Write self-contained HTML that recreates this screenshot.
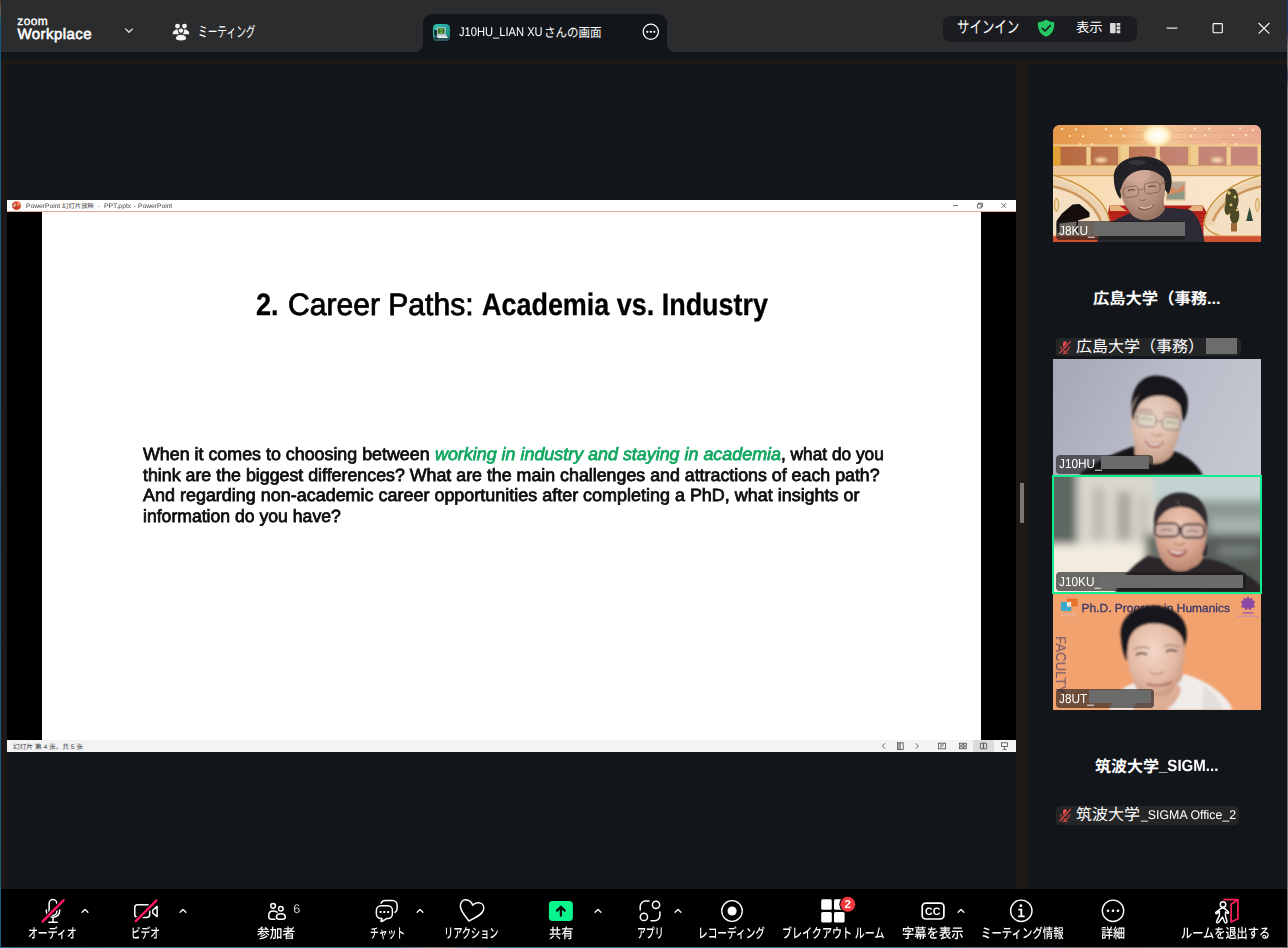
<!DOCTYPE html>
<html lang="ja"><head><meta charset="utf-8"><title>Zoom Workplace</title>
<style>
*{box-sizing:border-box;margin:0;padding:0}
html,body{width:1288px;height:948px;overflow:hidden;background:#12161a}
body{text-rendering:geometricPrecision;font-family:"Liberation Sans",sans-serif;color:#fff;position:relative}
#app{position:absolute;left:0;top:0;width:1288px;height:948px;overflow:hidden;background:#12161a}
.edge-l{left:0;top:0;width:1px;height:948px;background:linear-gradient(#5a3226 0,#6a5a4c 10px,#175a78 22px,#175a78 40%,#234f70 55%,#175a78 70%,#1a5d78 100%)}
.edge-r{left:1287px;top:0;width:1px;height:948px;background:linear-gradient(#1d3a68 0,#1d3a68 28px,#3a3552 34px,#6e6e73 46px,#6e6e73 66px,#3f3b5c 74px,#6e6e73 90px,#6e6e73 100%)}
.edge-b{left:0;top:947px;width:1288px;height:1px;background:linear-gradient(90deg,#2d6a82 0,#3a7a90 30%,#6f7d86 34%,#2f6f88 40%,#35718a 70%,#6e6e73 90%,#6e6e73 100%)}
.abs,.ic,.jt,.t{position:absolute}
.ic{display:block;overflow:visible}
.jt{display:block;overflow:visible;line-height:1}
.jt svg{display:block;position:absolute;left:0;top:0;overflow:visible}
.jt text{font-family:"Liberation Sans","Noto Sans CJK JP",sans-serif}
.jt text.sc{font-family:"Liberation Sans","Noto Sans CJK SC",sans-serif}
.t{white-space:nowrap;line-height:1;transform-origin:0 0}
.region{position:absolute;left:0;top:0;width:1288px;height:948px}
.titlebar-bg{left:1px;top:0;width:1286px;height:52px;background:#2b2c2e}
.tab{left:423px;top:14px;width:244px;height:38px;background:#12161a;border-radius:9px 9px 0 0}
.pill{left:943px;top:16px;width:194px;height:26px;border-radius:8px;background:#1a1c1f}
.toolbar-bg{left:1px;top:889px;width:1286px;height:58px;background:#000}
.brown{background:#1c1917}
.vid{overflow:hidden}
.vid svg{display:block}
.nm{background:rgba(24,24,26,.62);border-radius:4px}
.nm2{background:#242527;border-radius:4px}
</style></head>
<body>
<div id="app">
<div class="abs edge-l"></div><div class="abs edge-r"></div><div class="abs edge-b"></div>
<header class="region" id="titlebar">
<div class="abs titlebar-bg"></div>
<div class="t" style="left:17.2px;top:16.2px;font-size:11.9px;-webkit-text-stroke:0.4px #fff;letter-spacing:0.5px">zoom</div>
<div class="t" style="left:17.4px;top:27.2px;font-size:15px;-webkit-text-stroke:0.6px #fff;letter-spacing:0.45px">Workplace</div>
<svg class="ic" style="left:122px;top:25px" width="14" height="11" viewBox="122 25 14 11" ><path d="M125.3 28.6 L129 32.3 L132.7 28.6" fill="none" stroke="#e8e8e8" stroke-width="1.3"/></svg>
<svg class="ic" style="left:171px;top:22px" width="20" height="20" viewBox="171 22 20 20" ><g fill="#f2f2f2"><circle cx="177.5" cy="26.1" r="2.45"/><circle cx="184.5" cy="26.1" r="2.45"/><path d="M172.7 34.2 C172.7 31.2 175 29.6 177.2 29.6 C177.6 29.6 178 29.7 178.3 29.8 C177.9 30.6 177.8 31.6 178.3 32.5 C178.6 33.2 179 33.7 179.5 34.1 C179 34.2 178.4 34.3 177.8 34.3 Z"/><path d="M189.3 34.2 C189.3 31.2 187 29.6 184.8 29.6 C184.4 29.6 184 29.7 183.7 29.8 C184.1 30.6 184.2 31.6 183.7 32.5 C183.4 33.2 183 33.7 182.5 34.1 C183 34.2 183.6 34.3 184.2 34.3 Z"/><circle cx="181" cy="30.6" r="2.7" stroke="#2b2c2e" stroke-width="0.9"/><path d="M175.9 38.2 C175.9 35.9 178.3 34.7 181 34.7 C183.7 34.7 186.1 35.9 186.1 38.2 C186.1 39.7 183.9 40.4 181 40.4 C178.1 40.4 175.9 39.7 175.9 38.2 Z"/></g></svg>
<span class="jt" style="left:198.20px;top:23.66px;width:57.50px;height:17.52px;font-size:14.6px"><svg width="57.50" height="17.52" viewBox="0 -13.14 57.50 17.52"><text x="0" y="0" font-size="14.6" fill="#fff" textLength="57.5" lengthAdjust="spacingAndGlyphs">ミーティング</text></svg></span>
<div class="abs tab"></div>
<svg class="ic" style="left:415px;top:44px" width="8" height="8" viewBox="415 44 8 8" ><path d="M415 52 A8 8 0 0 0 423 44 L423 52 Z" fill="#12161a"/></svg>
<svg class="ic" style="left:667px;top:44px" width="8" height="8" viewBox="667 44 8 8" ><path d="M675 52 A8 8 0 0 1 667 44 L667 52 Z" fill="#12161a"/></svg>
<svg class="ic" style="left:433px;top:24px" width="17" height="17" viewBox="433 24 17 17" ><defs><linearGradient id="tg" x1="0" y1="0" x2="1" y2="1"><stop offset="0" stop-color="#2fc4b4"/><stop offset="1" stop-color="#15807c"/></linearGradient></defs><rect x="433" y="24" width="17" height="17" rx="4.2" fill="url(#tg)"/><path d="M433 36.5 L450 36.5 L450 37 Q450 41 446 41 L437 41 Q433 41 433 37 Z" fill="#2d5860"/><rect x="436.6" y="27.2" width="9.2" height="8" rx="0.8" fill="#b9c6c9"/><rect x="437.9" y="28.3" width="6.6" height="5.4" fill="#2d6b22"/><path d="M439.5 29.4h3.4M439.5 31h3.4M439.5 32.6h3.4" stroke="#7fd64a" stroke-width="0.7"/><path d="M437.6 35.2 L446.4 35.2 L448 37.9 L436 37.9 Z" fill="#dfe6e8"/><rect x="434.4" y="30" width="2.4" height="5.6" fill="#0d1a1c"/><path d="M435 37.4 L438 37.4 L438 38.6 L435 38.6 Z" fill="#0d1a1c"/></svg>
<div class="t" style="left:459px;top:26px;font-size:12.6px;transform:scaleX(0.885);letter-spacing:0">J10HU_LIAN XU</div>
<span class="jt" style="left:543.60px;top:25.28px;width:57.60px;height:15.36px;font-size:12.8px"><svg width="57.60" height="15.36" viewBox="0 -11.52 57.60 15.36"><text x="0" y="0" font-size="12.8" fill="#fff" textLength="57.6" lengthAdjust="spacingAndGlyphs">さんの画面</text></svg></span>
<svg class="ic" style="left:641px;top:22px" width="20" height="20" viewBox="641 22 20 20" ><circle cx="650.8" cy="31.8" r="7.6" fill="none" stroke="#fff" stroke-width="1.25"/><circle cx="647.3" cy="31.8" r="1.15" fill="#fff"/><circle cx="650.8" cy="31.8" r="1.15" fill="#fff"/><circle cx="654.3" cy="31.8" r="1.15" fill="#fff"/></svg>
<div class="abs pill"></div>
<span class="jt" style="left:956.50px;top:18.48px;width:62.30px;height:20.16px;font-size:16.8px"><svg width="62.30" height="20.16" viewBox="0 -15.12 62.30 20.16"><text x="0" y="0" font-size="16.8" fill="#fff" textLength="62.3" lengthAdjust="spacingAndGlyphs">サインイン</text></svg></span>
<svg class="ic" style="left:1036px;top:18px" width="20" height="20" viewBox="1036 18 20 20" ><path d="M1046.1 19.5 C1048.6 21.3 1051.3 22 1054.3 22.2 C1054.6 29.3 1052.3 34.2 1046.1 36.7 C1039.9 34.2 1037.6 29.3 1037.9 22.2 C1040.9 22 1043.6 21.3 1046.1 19.5 Z" fill="#25c862"/><path d="M1042.3 28.3 L1045 31 L1050.2 25.6" fill="none" stroke="#1b1d20" stroke-width="1.7" stroke-linecap="round" stroke-linejoin="round"/></svg>
<span class="jt" style="left:1075.60px;top:19.93px;width:26.60px;height:15.96px;font-size:13.3px"><svg width="26.60" height="15.96" viewBox="0 -11.97 26.60 15.96"><text x="0" y="0" font-size="13.3" fill="#fff" textLength="26.6" lengthAdjust="spacingAndGlyphs">表示</text></svg></span>
<svg class="ic" style="left:1109px;top:22px" width="12" height="12" viewBox="1109 22 12 12" ><g fill="#d9d9d9"><rect x="1110" y="22.9" width="5.6" height="10.3" rx="0.6"/><rect x="1116.6" y="22.9" width="3.7" height="2.9" rx="0.5"/><rect x="1116.6" y="26.6" width="3.7" height="2.9" rx="0.5"/><rect x="1116.6" y="30.3" width="3.7" height="2.9" rx="0.5"/></g></svg>
<svg class="ic" style="left:1160px;top:20px" width="120" height="16" viewBox="1160 20 120 16" ><path d="M1166.6 28.1 H1177.4" stroke="#fff" stroke-width="1.1"/><rect x="1213.1" y="23.6" width="9.2" height="9.2" rx="0.8" fill="none" stroke="#fff" stroke-width="1.1"/><path d="M1258.6 23 L1269.4 33.6 M1269.4 23 L1258.6 33.6" stroke="#fff" stroke-width="1.1"/></svg>
</header>
<main class="region" id="stage">
<div class="abs brown" style="left:1px;top:60px;width:1286px;height:4px"></div>
<div class="abs brown" style="left:1px;top:60px;width:6px;height:829px"></div>
<div class="abs brown" style="left:1016px;top:60px;width:12px;height:829px"></div>
<div class="abs" style="left:1020px;top:483px;width:4px;height:40px;background:#7a7875"></div>
<section class="abs" id="ppt" style="left:7px;top:200px;width:1009px;height:552px;background:#fff"></section>
<div class="abs" style="left:7px;top:211px;width:1009px;height:1px;background:#e6a999"></div>
<div class="abs" style="left:7px;top:212px;width:35px;height:528px;background:#000"></div>
<div class="abs" style="left:981px;top:212px;width:35px;height:528px;background:#000"></div>
<div class="abs" style="left:7px;top:740px;width:1009px;height:12px;background:#f3f3f5"></div>
<svg class="ic" style="left:11px;top:200px" width="12" height="12" viewBox="11 200 12 12" ><circle cx="16.6" cy="205.6" r="4.4" fill="#d24625"/><path d="M16.6 201.2 A4.4 4.4 0 0 1 21 205.6 L16.6 205.6 Z" fill="#f08a65"/><rect x="12.6" y="203" width="4.6" height="5.2" rx="0.6" fill="#b7361b"/><path d="M14 207.2 V204 H15.2 A1 1 0 0 1 15.2 206 H14" fill="none" stroke="#fff" stroke-width="0.7"/></svg>
<div class="t" style="left:25.6px;top:202.1px;font-size:13px;color:#3b3b3b;transform:scale(0.5144,0.5)">PowerPoint</div>
<span class="jt" style="left:61.70px;top:202.24px;width:32.00px;height:7.68px;font-size:6.4px"><svg width="32.00" height="7.68" viewBox="0 -5.76 32.00 7.68"><text class="sc" x="0" y="0" font-size="6.4" fill="#3b3b3b" textLength="32" lengthAdjust="spacingAndGlyphs">幻灯片放映</text></svg></span>
<div class="t" style="left:98.4px;top:202.1px;font-size:13px;color:#3b3b3b;transform:scale(0.4374,0.5)">-</div>
<div class="t" style="left:104.2px;top:202.1px;font-size:13px;color:#3b3b3b;transform:scale(0.5228,0.5)">PPT.pptx</div>
<div class="t" style="left:133.8px;top:202.1px;font-size:13px;color:#3b3b3b;transform:scale(0.4374,0.5)">-</div>
<div class="t" style="left:138.2px;top:202.1px;font-size:13px;color:#3b3b3b;transform:scale(0.5144,0.5)">PowerPoint</div>
<svg class="ic" style="left:950px;top:200px" width="60" height="12" viewBox="950 200 60 12" ><g fill="none" stroke="#444" stroke-width="0.8"><path d="M953 205.6 H958"/><rect x="977.4" y="204.2" width="3.8" height="3.8" rx="0.6"/><path d="M978.6 204.2 V203.2 H982.4 V207 H981.2"/><path d="M1001.4 203.2 L1006 207.8 M1006 203.2 L1001.4 207.8"/></g></svg>
<div class="t" style="left:256.2px;top:289.40px;font-size:31px;color:#000;-webkit-text-stroke:0.3px #000;transform:scaleX(0.8740)"><span style="font-weight:700">2.</span></div>
<div class="t" style="left:287.6px;top:289.40px;font-size:31px;color:#000;-webkit-text-stroke:0.8px #000;transform:scaleX(0.9704)">Career Paths:</div>
<div class="t" style="left:481.8px;top:289.40px;font-size:31px;color:#000;-webkit-text-stroke:0.3px #000;transform:scaleX(0.8691)"><span style="font-weight:700">Academia vs. Industry</span></div>
<div class="t" style="left:142.8px;top:446.20px;font-size:17.7px;color:#0b0b0b;-webkit-text-stroke:0.75px #0b0b0b;transform:scaleX(1.0087)">When it comes to choosing between</div>
<div class="t" style="left:435px;top:446.20px;font-size:17.7px;color:#10a760;-webkit-text-stroke:0.75px #10a760;transform:scaleX(1.0112)"><span style="font-style:italic">working in industry and staying in academia</span></div>
<div class="t" style="left:781.4px;top:446.20px;font-size:17.7px;color:#0b0b0b;-webkit-text-stroke:0.75px #0b0b0b;transform:scaleX(0.9770)">, what do you</div>
<div class="t" style="left:142.8px;top:467.20px;font-size:17.7px;color:#0b0b0b;-webkit-text-stroke:0.75px #0b0b0b;transform:scaleX(1.0061)">think are the biggest differences? What are the main challenges and attractions of each path?</div>
<div class="t" style="left:142.8px;top:487.20px;font-size:17.7px;color:#0b0b0b;-webkit-text-stroke:0.75px #0b0b0b;transform:scaleX(1.0150)">And regarding non-academic career opportunities after completing a PhD, what insights or</div>
<div class="t" style="left:142.8px;top:508.20px;font-size:17.7px;color:#0b0b0b;-webkit-text-stroke:0.75px #0b0b0b;transform:scaleX(0.9958)">information do you have?</div>
<span class="jt" style="left:13.40px;top:743.07px;width:70.05px;height:8.04px;font-size:6.7px"><svg width="70.05" height="8.04" viewBox="0 -6.03 70.05 8.04"><text class="sc" x="0" y="0" font-size="6.7" fill="#3a3a3a" textLength="70.05" lengthAdjust="spacingAndGlyphs">幻灯片 第 4 张，共 5 张</text></svg></span>
<div class="abs" style="left:973px;top:740px;width:21px;height:12px;background:#dcdcdc"></div>
<svg class="ic" style="left:878px;top:740px" width="135" height="12" viewBox="878 740 135 12" ><g fill="none" stroke="#4a4a4a" stroke-width="0.8"><path d="M885 743.3 L882.4 746 L885 748.7"/><path d="M915.8 743.3 L918.4 746 L915.8 748.7"/><rect x="897.6" y="742.8" width="5.6" height="6.6"/><path d="M899 742.8 V749.4 M900.2 742.8 V749.4" /><rect x="938.4" y="743.2" width="7" height="5.6"/><path d="M940 745 H944 M940 746.8 H942.4"/><rect x="959.4" y="743.2" width="2.8" height="2"/><rect x="963.6" y="743.2" width="2.8" height="2"/><rect x="959.4" y="746.8" width="2.8" height="2"/><rect x="963.6" y="746.8" width="2.8" height="2"/><path d="M980.4 743.4 V748.8 H983.4 V743 Z M986.6 743.4 V748.8 H983.6 V743 Z"/><rect x="1001.6" y="742.8" width="6" height="3.6"/><path d="M1004.6 746.4 V749 M1002.6 749.4 H1006.6"/></g></svg>
</main>
<aside class="region" id="gallery">
<div class="abs vid" style="left:1053px;top:125px;width:208px;height:117px;border-radius:7px 7px 0 0"><svg width="208" height="117" viewBox="0 0 208 117"><defs><filter id="b1" x="-5%" y="-5%" width="110%" height="110%"><feGaussianBlur stdDeviation="0.75"/></filter><filter id="b1b" x="-30%" y="-30%" width="160%" height="160%"><feGaussianBlur stdDeviation="1.6"/></filter><linearGradient id="c1" x1="0" x2="1"><stop offset="0" stop-color="#e5984a"/><stop offset="0.35" stop-color="#eeb070"/><stop offset="0.5" stop-color="#f6cf9e"/><stop offset="0.65" stop-color="#efb892"/><stop offset="1" stop-color="#ebac92"/></linearGradient><linearGradient id="uw1" x1="0" x2="1" y1="0" y2="0"><stop offset="0" stop-color="#b6693c"/><stop offset="0.4" stop-color="#be7858"/><stop offset="0.6" stop-color="#c48474"/><stop offset="1" stop-color="#c5887c"/></linearGradient><linearGradient id="lw1" x1="0" x2="1" y1="0" y2="0"><stop offset="0" stop-color="#f8d9aa"/><stop offset="0.5" stop-color="#f8e2c4"/><stop offset="1" stop-color="#fbe6d0"/></linearGradient><radialGradient id="ch1"><stop offset="0" stop-color="#ffffff"/><stop offset="0.55" stop-color="#fff8dc"/><stop offset="0.82" stop-color="#fde4ae" stop-opacity="0.9"/><stop offset="1" stop-color="#f6cf9e" stop-opacity="0"/></radialGradient><radialGradient id="f1" cx="0.45" cy="0.3" r="0.75"><stop offset="0" stop-color="#cfa794"/><stop offset="0.6" stop-color="#b58d7b"/><stop offset="1" stop-color="#93705f"/></radialGradient><linearGradient id="st1" y1="0" y2="1" x1="0" x2="0"><stop offset="0" stop-color="#b51c18"/><stop offset="1" stop-color="#d63a2c"/></linearGradient></defs><rect width="208" height="117" fill="url(#lw1)"/><g filter="url(#b1)"><rect y="-2" width="208" height="23.5" fill="url(#c1)"/><path d="M0 7.5 H208 M0 14.5 H208" stroke="#d9924f" stroke-width="0.6" opacity="0.5"/><rect y="20.6" width="208" height="20" fill="url(#uw1)"/><rect y="19.4" width="208" height="2.2" fill="#f0c98c"/><rect x="-1" y="21" width="8.5" height="30" fill="#dfa238"/><g fill="#efcd8e"><rect x="33.4" y="22" width="4.4" height="19"/><rect x="65" y="21" width="11" height="20"/><rect x="102.6" y="21" width="4.3" height="19"/><rect x="135" y="21" width="10.4" height="20"/><rect x="173.5" y="22" width="4.4" height="19"/><rect x="204.5" y="21" width="5" height="30"/></g><g fill="#e2ab62" opacity="0.55"><rect x="65" y="21" width="2.5" height="20"/><rect x="135" y="21" width="2.5" height="20"/></g><rect y="40.3" width="208" height="10.6" fill="#efc796"/><rect y="40" width="208" height="1.1" fill="#d5a565"/><rect y="49.9" width="208" height="1.3" fill="#d2a05c"/><rect x="112.8" y="56.1" width="19.9" height="19.5" fill="#d6bc9a"/><rect x="114.2" y="57.5" width="17.1" height="16.7" fill="#b7aa94"/><path d="M114.2 68 L119 62 L124 65 L131.3 59 V71 L114.2 74.2Z" fill="#d38a62"/><path d="M114.2 70 L131.3 66 V74.2 H114.2Z" fill="#8f9a86"/><path d="M56.5 80.4 H149.5 L172 117 H49 Z" fill="url(#st1)"/><g stroke="#8a1411" stroke-width="0.8" opacity="0.65"><path d="M56 84.5H152M55 88.5H155M54 92.5H157M53 96.5H160M52 100.5H162M51 104.5H165M50.5 108.5H167M50 112.5H170"/></g><path d="M56.5 80.4 L66 80.4 L74 86 L57 86 Z M149.5 80.4 L140 80.4 L133 86 L150 86 Z" fill="#e4b27a"/><path d="M-2 50 C24 58 50 72 57.5 98 L57.5 117 L-2 117 Z" fill="#f4dfc2"/><path d="M210 50 C184 58 158 72 150.5 98 L150.5 117 L210 117 Z" fill="#f4dfc2"/><path d="M-2 62 C20 66 40 78 47 100 L57 100 C52 76 28 60 -2 52 Z" fill="#ecd2ae"/><path d="M210 62 C188 66 168 78 161 100 L151 100 C156 76 180 60 210 52 Z" fill="#ecd2ae"/><path d="M-2 49.5 C26 57 53 72 57 98" fill="none" stroke="#cc9642" stroke-width="1.5"/><path d="M-2 61 C20 65 40 76 48 96" fill="none" stroke="#c58a4a" stroke-width="2.4" opacity="0.8"/><path d="M210 49.5 C182 57 155 72 151 98" fill="none" stroke="#cc9642" stroke-width="1.5"/><path d="M210 61 C188 65 168 76 160 96" fill="none" stroke="#c58a4a" stroke-width="2.4" opacity="0.8"/><path d="M151 98 C153 105 161 110 174 112" fill="none" stroke="#cc9642" stroke-width="1.3"/><path d="M57 98 C55.5 103 52 107 47 109" fill="none" stroke="#cc9642" stroke-width="1.3"/><rect y="110.8" width="208" height="7" fill="#cf5230"/><rect y="110.2" width="208" height="1" fill="#ecb988"/><path d="M3.5 96 L9 88.5 L19.5 79.6 L26.5 79 L36.5 87.5 L36.5 92 L25 95.4 L25 108 L23.4 108 L23.4 96.4 L6.4 98.6 L6.4 108 L4.6 108 Z" fill="#14100f"/><ellipse cx="3.6" cy="80" rx="2.8" ry="7" fill="#d9aa62"/><ellipse cx="3.6" cy="80" rx="1.5" ry="5" fill="#f1dab2"/><g fill="#4c4a26"><ellipse cx="179" cy="75" rx="6.6" ry="11.5"/><ellipse cx="181.5" cy="90" rx="4.8" ry="9"/><ellipse cx="174.5" cy="84" rx="3" ry="6"/></g><path d="M193.2 96 L196.6 82 L200 96 Z" fill="#2f4a3a"/><g fill="#e0cb72"><circle cx="176" cy="68" r="1.7"/><circle cx="182" cy="72" r="1.4"/><circle cx="178" cy="80" r="1.4"/><circle cx="184" cy="85" r="1.2"/><circle cx="176.5" cy="90" r="1.1"/></g><rect x="178" y="98" width="6" height="8.5" fill="#9c6838"/><ellipse cx="204.4" cy="80" rx="2.4" ry="7" fill="#d9aa62"/><ellipse cx="204.4" cy="80" rx="1.2" ry="5" fill="#f1dab2"/><g fill="#f8dcae" filter="url(#b1b)"><ellipse cx="48" cy="35" rx="6" ry="2.6"/><ellipse cx="164" cy="35" rx="6" ry="2.6"/><ellipse cx="104" cy="34" rx="4" ry="2.4" opacity="0.6"/></g></g><ellipse cx="104.3" cy="10.6" rx="15.5" ry="12" fill="url(#ch1)"/><g fill="#fff4d2"><circle cx="9" cy="4" r="1"/><circle cx="23" cy="4.2" r="1"/><circle cx="53" cy="4" r="1"/><circle cx="68" cy="4" r="1"/><circle cx="17" cy="11" r="1"/><circle cx="30" cy="11.2" r="1"/><circle cx="58" cy="11" r="1"/><circle cx="71" cy="11" r="1"/><circle cx="27" cy="19" r="0.9"/><circle cx="39" cy="19" r="0.9"/><circle cx="142" cy="3.6" r="1"/><circle cx="156" cy="3.6" r="1"/><circle cx="187" cy="3.2" r="1"/><circle cx="200" cy="5" r="1"/><circle cx="138" cy="11" r="1"/><circle cx="152" cy="10.6" r="1"/><circle cx="180" cy="10" r="1"/><circle cx="193" cy="10" r="1"/><circle cx="171" cy="19" r="0.9"/><circle cx="183" cy="19" r="0.9"/></g><g filter="url(#b1)"><path d="M44 117 C48 104 56 97 66 93 L80 87 L112 82.5 L136 84.5 C144 88 149 100 151.5 117 Z" fill="#2f2c36"/><path d="M76 86 C82 98 104 99 112 84 L110 74 L78 74 Z" fill="#9c7462"/><path d="M60.8 53 C60.4 40 72 31.6 90 31.6 C107 31.6 118.6 41 118.6 55 C118.6 62 117.2 66 115.3 69 L110 62 L72 58 L67.4 74 C62.6 68 60.9 60 60.8 53 Z" fill="#242027"/><g transform="rotate(-7 89 66)"><path d="M67 60 C67 46 76 39 90 39 C104 39 112.6 47 112.6 60 C112.6 77 104 95 90 95 C77 95 67 77 67 60 Z" fill="url(#f1)"/><ellipse cx="87" cy="50" rx="13" ry="6.5" fill="#d2ab98" opacity="0.75"/></g><path d="M62 60 C64 44 76 36 91 36.5 C104 37 113 45 116.6 60 C110 50 102 45.4 93 45 C82 44.6 72 50 68.5 62 C67 66 66 68 65 70 Z" fill="#242027"/><ellipse cx="84" cy="37.5" rx="9" ry="2.6" fill="#4a4650" opacity="0.5"/><g fill="none" stroke="#5c4a46" stroke-width="0.65" opacity="0.8"><rect x="70.5" y="61.5" width="15" height="10.5" rx="3.8" transform="rotate(-9 78 67)"/><rect x="91.5" y="57.6" width="15.5" height="10.5" rx="3.8" transform="rotate(-9 99 63)"/><path d="M85.4 65 L91.6 63.6 M106.8 59.6 L114.6 56.6"/></g><path d="M75 65.6 C77 64.6 80 64.4 82 65.2 M95.5 61.8 C97.5 60.8 100.5 60.8 102.5 61.6" stroke="#4a3834" stroke-width="1" fill="none"/><path d="M85.6 82.8 C90 85.6 97 84.4 101 80" fill="none" stroke="#87584e" stroke-width="1.6"/><path d="M87.4 82.2 C91 83.8 96 83 99.4 80.6" fill="none" stroke="#ead8cf" stroke-width="1.1"/><path d="M86 74.4 C88 76.2 91 76 93 74" fill="none" stroke="#946a5a" stroke-width="1"/></g></svg></div>
<div class="abs nm" style="left:1055.8px;top:221.2px;width:129.6px;height:18.7px"></div><div class="t" style="left:1059.2px;top:224.20px;font-size:13px;transform:scaleX(0.91)">J8KU_</div><div class="abs" style="left:1094px;top:222px;width:91px;height:14px;background:#6b6b6b"></div>
<span class="jt" style="left:1093.40px;top:290.40px;width:127.60px;height:19.20px;font-size:16px"><svg width="127.60" height="19.20" viewBox="0 -14.40 127.60 19.20"><text x="0" y="0" font-size="16" font-weight="700" fill="#fff" textLength="127.6" lengthAdjust="spacingAndGlyphs">広島大学（事務...</text></svg></span>
<div class="abs nm2" style="left:1056px;top:337.6px;width:184.6px;height:18.6px"></div>
<svg class="ic" style="left:1057.2px;top:338.6px" width="16" height="16" viewBox="1057.2 338.6 16 16" ><g transform="translate(1065.2 346.6) scale(0.92)"><rect x="-2.1" y="-6.2" width="4.2" height="8.2" rx="2.1" fill="#ef4a4d"/><path d="M-4.4 -0.6 V0.4 A4.4 4.4 0 0 0 4.4 0.4 V-0.6 M0 4.8 V6.6 M-2.4 6.8 H2.4" fill="none" stroke="#ef4a4d" stroke-width="1.2" stroke-linecap="round"/><path d="M-5.6 6.4 L6 -6.2" stroke="#252628" stroke-width="2.6"/><path d="M-5.6 6.4 L6 -6.2" stroke="#ef4a4d" stroke-width="1.3" stroke-linecap="round"/></g></svg>
<span class="jt" style="left:1076.40px;top:337.60px;width:128.00px;height:19.20px;font-size:16px"><svg width="128.00" height="19.20" viewBox="0 -14.40 128.00 19.20"><text x="0" y="0" font-size="16" fill="#fff" textLength="128" lengthAdjust="spacingAndGlyphs">広島大学（事務）</text></svg></span>
<div class="abs" style="left:1206px;top:338.4px;width:31.4px;height:15.8px;background:#6c6c6c"></div>
<div class="abs vid" style="left:1053px;top:359px;width:208px;height:116px"><svg width="208" height="116" viewBox="0 0 208 116"><defs><filter id="b2" x="-5%" y="-5%" width="110%" height="110%"><feGaussianBlur stdDeviation="0.85"/></filter><linearGradient id="w2" x1="0" x2="1" y1="0.3" y2="0.6"><stop offset="0" stop-color="#a7a9b7"/><stop offset="0.5" stop-color="#b9bbc8"/><stop offset="1" stop-color="#c4c7d1"/></linearGradient><radialGradient id="f2" cx="0.45" cy="0.38" r="0.68"><stop offset="0" stop-color="#ecd4c6"/><stop offset="0.6" stop-color="#dcbba9"/><stop offset="1" stop-color="#bd927d"/></radialGradient></defs><rect width="208" height="116" fill="url(#w2)"/><g filter="url(#b2)"><path d="M26 116 C36 106 56 96 80.6 87 L100 92 L118.6 91.5 C130 94 143 103 150 116 Z" fill="#131216"/><path d="M81 84 L82 96 C92 108 112 108 120 94 L121 80 Z" fill="#cfa893"/><path d="M79 56 C75.6 30 88 16.4 103 16.6 C122 17 137 30 134.8 47 C134.4 54 132.6 59 129.8 63 L127 46 C118 38 100 36 88 42 L83.6 60 C81.6 60 79.6 58 79 56 Z" fill="#17141a"/><path d="M78 58 C78 40 88 30 103 30.4 C119 30.8 128.6 40 128.2 58 C127.8 76 122 92 114 100 C108 105.6 98 105.4 91 99.4 C82.6 92 78 76 78 58 Z" fill="url(#f2)"/><path d="M78.6 56 C80 40 90 28 104 28 C120 28 131 38 132 54 C127 44 120 38 110 37 C98 36 88 40 84 50 C82 54 81 58 80.4 62 Z" fill="#17141a"/><g fill="#d9e2d2" opacity="0.38"><rect x="84" y="54.6" width="19" height="13" rx="4.5" transform="rotate(6 93 61)"/><rect x="109.4" y="58" width="18" height="12.6" rx="4.5" transform="rotate(6 118 64)"/></g><g fill="none" stroke="#77706c" stroke-width="0.9"><rect x="84" y="54.6" width="19" height="13" rx="4.5" transform="rotate(6 93 61)"/><rect x="109.4" y="58" width="18" height="12.6" rx="4.5" transform="rotate(6 118 64)"/><path d="M103 61.6 L109.4 63 M84 58 L79.6 56"/></g><path d="M87 60.6 C90 59 95 59 99 61 M112.6 64 C115.6 62.6 120 62.8 123.6 64.6" stroke="#7c9a66" stroke-width="1.5" fill="none" opacity="0.6"/><path d="M84 52.6 C88 50 95 50 100 52.4 M110 54.6 C115 53 121 54 125 57" stroke="#6a5046" stroke-width="1.1" fill="none" opacity="0.6"/><path d="M98 74 C100 77.4 106 77.8 109 74.8" fill="none" stroke="#b48873" stroke-width="1.3"/><path d="M91.2 81.2 C95 91 108 91 111.2 82.4 C105 85 97 84.4 91.2 81.2 Z" fill="#a85a52"/><path d="M93 82.4 C98 85.2 105 85.6 109.8 83.4 C106 88 97 87.8 93 82.4 Z" fill="#f7f0ec"/></g></svg></div>
<div class="abs nm" style="left:1056px;top:454.8px;width:96.6px;height:18.8px"></div><div class="t" style="left:1059.4px;top:457.40px;font-size:13px;transform:scaleX(0.91)">J10HU_</div><div class="abs" style="left:1101px;top:456.1px;width:47.8px;height:12.8px;background:#6b6b6b"></div>
<div class="abs vid" style="left:1053px;top:476px;width:208px;height:117px"><svg width="208" height="117" viewBox="0 0 208 117"><defs><filter id="b3" x="-20%" y="-20%" width="140%" height="140%"><feGaussianBlur stdDeviation="4.5"/></filter><filter id="b3s" x="-5%" y="-5%" width="110%" height="110%"><feGaussianBlur stdDeviation="0.85"/></filter><radialGradient id="f3" cx="0.48" cy="0.32" r="0.7"><stop offset="0" stop-color="#ecc8b5"/><stop offset="0.6" stop-color="#d8a791"/><stop offset="1" stop-color="#b6806c"/></radialGradient></defs><rect width="208" height="117" fill="#8d938e"/><g filter="url(#b3)"><rect x="-10" y="-10" width="38" height="82" fill="#5d6862"/><rect x="24" y="-8" width="82" height="82" fill="#d9d6cc"/><rect x="40" y="12" width="11" height="52" fill="#bab7ad"/><rect x="64" y="16" width="14" height="48" fill="#a7a59c"/><rect x="86" y="20" width="8" height="44" fill="#c2c0b6"/><rect x="-10" y="68" width="112" height="60" fill="#f2ecdf"/><rect x="100" y="-10" width="120" height="34" fill="#c3d3d1"/><rect x="150" y="24" width="70" height="18" fill="#8b9793"/><rect x="158" y="42" width="55" height="16" fill="#a7b3b0"/><rect x="150" y="58" width="70" height="70" fill="#555b57"/><rect x="165" y="70" width="40" height="10" fill="#79827e"/><rect x="92" y="58" width="18" height="30" fill="#676c66"/></g><g filter="url(#b3s)"><path d="M62 117 C66 104 78 90 94.7 79.7 L106 82 L151.2 82.2 C166 84 192 94 208 110 L208 117 Z" fill="#2b2829"/><path d="M108 80 C112 98 146 98 150 80 L148 72 L110 72 Z" fill="#c8957f"/><path d="M148 60 C153 62 156.6 70 153 81 C151 82 149 80 148.4 76 Z" fill="#2f2a2e"/><path d="M101.3 50 C99 30 110 16.6 127 16.6 C146 16.6 156 30 154.2 50 L153 62 L149 48 L106 46 L103 62 C102 58 101.5 54 101.3 50 Z" fill="#2f2a2e"/><path d="M101.9 56 C101.9 38 112 27 127.4 27 C143 27 153.6 38 153.6 56 C153.6 76 143 95.6 127.4 95.6 C112 95.6 101.9 76 101.9 56 Z" fill="url(#f3)"/><path d="M102 52 C103 34 113 23.6 127.4 23.6 C142 23.6 152.6 34 153.6 52 C149 38 140 31 127.4 31 C115 31 106 38 102 52 Z" fill="#2f2a2e"/><path d="M124 24 L127 31" stroke="#8a7a78" stroke-width="0.7"/><g fill="#c9b7b8" opacity="0.42"><rect x="101.9" y="47.3" width="24" height="13.4" rx="5"/><rect x="128.3" y="48.3" width="23" height="13.4" rx="5"/></g><g fill="none" stroke="#2c2428" stroke-width="1.8"><rect x="101.9" y="47.3" width="24" height="13.4" rx="5"/><rect x="128.3" y="48.3" width="23" height="13.4" rx="5"/><path d="M125.9 52.4 C126.8 51.6 127.6 51.6 128.3 52.6"/></g><path d="M108 54.6 C111 53.4 116 53.4 119 54.8 M134 55.6 C137 54.4 142 54.4 145 55.8" stroke="#4c3c3a" stroke-width="1.1" fill="none" opacity="0.75"/><path d="M120.6 66.6 C123 69.6 129 69.8 131.6 67" fill="none" stroke="#b27c69" stroke-width="1.3"/><path d="M113.9 72.6 C118 84 132 84 134.3 73 C128 76 120 76 113.9 72.6 Z" fill="#a04a44"/><path d="M115.6 73.6 C121 76.6 128 76.8 132.8 74.4 C129 79.4 119 79.2 115.6 73.6 Z" fill="#f6efeb"/></g></svg></div>
<div class="abs" style="left:1052px;top:475px;width:210px;height:119px;border:2px solid #0fee8e"></div>
<div class="abs nm" style="left:1056px;top:571.8px;width:190px;height:19.6px"></div><div class="t" style="left:1059.4px;top:574.80px;font-size:13px;transform:scaleX(0.91)">J10KU_</div><div class="abs" style="left:1100px;top:574.8px;width:143px;height:13.2px;background:#6b6b6b"></div>
<div class="abs vid" style="left:1053px;top:594px;width:208px;height:116px"><svg width="208" height="116" viewBox="0 0 208 116"><defs><filter id="b4" x="-5%" y="-5%" width="110%" height="110%"><feGaussianBlur stdDeviation="0.85"/></filter><filter id="b4t" x="-5%" y="-20%" width="110%" height="140%"><feGaussianBlur stdDeviation="0.35"/></filter><radialGradient id="f4" cx="0.45" cy="0.35" r="0.68"><stop offset="0" stop-color="#f3d7c7"/><stop offset="0.6" stop-color="#e3b9a3"/><stop offset="1" stop-color="#c48f78"/></radialGradient></defs><rect width="208" height="116" fill="#f2a26f"/><g filter="url(#b4t)"><rect x="7.8" y="8" width="10.4" height="9" rx="1" fill="#3aa9c9"/><rect x="14" y="4.6" width="10.8" height="8" rx="1" fill="#e8732f"/><rect x="14" y="8" width="4.2" height="4.6" fill="#f3e8dd"/><rect x="8" y="19.4" width="16" height="0.9" fill="#e7b59c"/><rect x="8" y="21.4" width="16" height="0.9" fill="#e7b59c"/><text x="28.6" y="17.8" font-family="Liberation Sans, sans-serif" font-size="11.6" fill="#3e3a68" stroke="#3e3a68" stroke-width="0.35" textLength="148.4" lengthAdjust="spacingAndGlyphs">Ph.D. Program in Humanics</text><g fill="#8a4aa0"><path d="M195 2 l1.6 3 l2.6 -1.6 l0.4 3.2 l2.8 0.6 l-1.6 3 l1.2 3 l-3.4 0.6 l-1.4 2.6 l-2.2 -2.4 l-2.2 2.4 l-1.4 -2.6 l-3.4 -0.6 l1.2 -3 l-1.6 -3 l2.8 -0.6 l0.4 -3.2 l2.6 1.6 Z"/></g><rect x="189.6" y="18" width="11" height="1.8" fill="#9b62ae" opacity="0.8"/><rect x="184" y="21.6" width="22" height="1.2" fill="#b683c0" opacity="0.7"/><text transform="translate(3,42.2) rotate(90)" font-family="Liberation Sans, sans-serif" font-size="14.2" fill="#6d5468" textLength="58" lengthAdjust="spacingAndGlyphs">FACULTY</text></g><g filter="url(#b4)"><path d="M56 116 C60 102 68 94 78 90 L84 88.6 L131.2 80.2 C148 84 166 96 172 104 C176 108 178.6 112 179.4 116 Z" fill="#efece9"/><path d="M150 92 C158 96 166 104 170 116 L150 116 Z" fill="#dcd8d6" opacity="0.7"/><path d="M86 84 C92 100 122 102 130 82 L128 72 L88 72 Z" fill="#d3a28b"/><path d="M68 44 C65 24 82 11.4 101 11.6 C122 12 136 26 133.6 44 L131.2 54 L128 42 C118 32 92 30 80 40 L77 62 L73.5 67 C70 60 68.6 52 68 44 Z" fill="#17141a"/><path d="M74 58 C74 40 84 28 102 28 C120 28 131.8 40 131.8 58 C131.8 80 120 108 102 108 C86 108 74 80 74 58 Z" fill="url(#f4)"/><path d="M72 52 C72 34 84 20 102 20 C120 20 132.6 32 132.6 50 C129 40 121 32.6 108 30 C94 27.6 80 32 76 46 C75 50 74.4 56 74.2 60 Z" fill="#17141a"/><path d="M83 61 C86 58.6 91 58.6 94 60.6 M113 57.6 C116 55.6 121 55.6 124 57.6" stroke="#352622" stroke-width="1.9" fill="none"/><path d="M81 55.4 C86 52.6 92 52.6 96.6 54.6 M110.6 52.6 C115.6 50.4 121.6 50.8 126 53.4" stroke="#4a3a35" stroke-width="1.1" fill="none" opacity="0.65"/><path d="M97 77.6 C100 81 107 81 110 77.6" fill="none" stroke="#bb8872" stroke-width="1.4"/><path d="M93.9 89.6 C100 92.6 112 92 119 87.6" fill="none" stroke="#ab665c" stroke-width="1.9"/><path d="M80 116 C83 104 88 96 95 93 C99 92.6 99.6 97 97 100 L104 102.6 C113 103 120 99 124 91.4 C128 90.6 129 96 126 102 C122 109 118 113 113 116 Z" fill="#dfae96"/></g></svg></div>
<div class="abs nm" style="left:1056px;top:689.2px;width:97.6px;height:18.6px"></div><div class="t" style="left:1059.4px;top:692.10px;font-size:13px;transform:scaleX(0.91)">J8UT_</div><div class="abs" style="left:1089px;top:689.8px;width:62.4px;height:13.2px;background:#6b6b6b"></div>
<span class="jt" style="left:1094.80px;top:758.40px;width:64.00px;height:19.20px;font-size:16px"><svg width="64.00" height="19.20" viewBox="0 -14.40 64.00 19.20"><text x="0" y="0" font-size="16" font-weight="700" fill="#fff" textLength="64" lengthAdjust="spacingAndGlyphs">筑波大学</text></svg></span>
<div class="t" style="left:1158.8px;top:758.2px;font-size:16.2px;font-weight:700;transform:scaleX(0.93)">_SIGM...</div>
<div class="abs nm2" style="left:1056px;top:806.4px;width:183.4px;height:18.8px"></div>
<svg class="ic" style="left:1057.2px;top:807.2px" width="16" height="16" viewBox="1057.2 807.2 16 16" ><g transform="translate(1065.2 815.2) scale(0.92)"><rect x="-2.1" y="-6.2" width="4.2" height="8.2" rx="2.1" fill="#ef4a4d"/><path d="M-4.4 -0.6 V0.4 A4.4 4.4 0 0 0 4.4 0.4 V-0.6 M0 4.8 V6.6 M-2.4 6.8 H2.4" fill="none" stroke="#ef4a4d" stroke-width="1.2" stroke-linecap="round"/><path d="M-5.6 6.4 L6 -6.2" stroke="#252628" stroke-width="2.6"/><path d="M-5.6 6.4 L6 -6.2" stroke="#ef4a4d" stroke-width="1.3" stroke-linecap="round"/></g></svg>
<span class="jt" style="left:1076.40px;top:806.00px;width:64.00px;height:19.20px;font-size:16px"><svg width="64.00" height="19.20" viewBox="0 -14.40 64.00 19.20"><text x="0" y="0" font-size="16" fill="#fff" textLength="64" lengthAdjust="spacingAndGlyphs">筑波大学</text></svg></span>
<div class="t" style="left:1140.6px;top:808.8px;font-size:12.6px;transform:scaleX(0.98)">_SIGMA Office_2</div>
</aside>
<footer class="region" id="toolbar">
<div class="abs toolbar-bg"></div>
<svg class="ic" style="left:38px;top:896px" width="30" height="30" viewBox="38 896 30 30" ><rect x="49.1" y="899.6" width="7.7" height="15.7" rx="3.85" fill="none" stroke="#fff" stroke-width="1.5" stroke-linecap="round" stroke-linejoin="round"/><path d="M46.3 909.9 V910.7 A6.7 6.6 0 0 0 59.7 910.7 V909.9" fill="none" stroke="#fff" stroke-width="1.5" stroke-linecap="round" stroke-linejoin="round"/><path d="M53 917.6 V922 M48.9 922.2 H57.2" fill="none" stroke="#fff" stroke-width="1.5" stroke-linecap="round" stroke-linejoin="round"/><path d="M42.6 921.5 L63.5 900.3" stroke="#000" stroke-width="4.8"/><path d="M42.6 921.5 L63.5 900.3" stroke="#fb1761" stroke-width="2.5" stroke-linecap="round"/></svg>
<svg class="ic" style="left:79px;top:906.2px" width="12" height="10" viewBox="79 906.2 12 10" ><path d="M82.1 912.5 L85 909.7 L87.9 912.5" fill="none" stroke="#fff" stroke-width="1.3" stroke-linecap="round" stroke-linejoin="round"/></svg>
<span class="jt" style="left:28.35px;top:926.06px;width:48.50px;height:16.32px;font-size:13.6px"><svg width="48.50" height="16.32" viewBox="0 -12.24 48.50 16.32"><text x="0" y="0" font-size="13.6" font-weight="500" fill="#fff" textLength="48.5" lengthAdjust="spacingAndGlyphs">オーディオ</text></svg></span>
<svg class="ic" style="left:130px;top:896px" width="32" height="30" viewBox="130 896 32 30" ><rect x="134.8" y="904.8" width="14.9" height="12.6" rx="2.8" fill="none" stroke="#fff" stroke-width="1.5" stroke-linecap="round" stroke-linejoin="round"/><path d="M152.7 910.2 L157.1 906.4 V916.6 L152.7 913 Z" fill="none" stroke="#fff" stroke-width="1.5" stroke-linecap="round" stroke-linejoin="round"/><path d="M135.8 921.1 L156.3 900.7" stroke="#000" stroke-width="4.8"/><path d="M135.8 921.1 L156.3 900.7" stroke="#fb1761" stroke-width="2.5" stroke-linecap="round"/></svg>
<svg class="ic" style="left:177px;top:906.2px" width="12" height="10" viewBox="177 906.2 12 10" ><path d="M180.1 912.5 L183 909.7 L185.9 912.5" fill="none" stroke="#fff" stroke-width="1.3" stroke-linecap="round" stroke-linejoin="round"/></svg>
<span class="jt" style="left:131.00px;top:926.06px;width:28.80px;height:16.32px;font-size:13.6px"><svg width="28.80" height="16.32" viewBox="0 -12.24 28.80 16.32"><text x="0" y="0" font-size="13.6" font-weight="500" fill="#fff" textLength="28.8" lengthAdjust="spacingAndGlyphs">ビデオ</text></svg></span>
<svg class="ic" style="left:265px;top:900px" width="24" height="22" viewBox="265 900 24 22" ><circle cx="273.1" cy="905.8" r="2.35" fill="none" stroke="#fff" stroke-width="1.5" stroke-linecap="round" stroke-linejoin="round"/><path d="M277 912.2 C276 911.4 274.6 910.95 273.1 910.95 C270.5 910.95 268.75 912.9 268.75 915.6 V916.6 C268.75 918.3 269.8 919.2 271.4 919.2 H274.7" fill="none" stroke="#fff" stroke-width="1.5" stroke-linecap="round" stroke-linejoin="round"/><circle cx="280.8" cy="908.75" r="2.3" fill="none" stroke="#fff" stroke-width="1.5" stroke-linecap="round" stroke-linejoin="round"/><path d="M276.4 917 C276.4 915 278 913.8 280.85 913.8 C283.7 913.8 285.3 915 285.3 917 C285.3 918.5 284.4 919.2 282.8 919.2 H278.9 C277.3 919.2 276.4 918.5 276.4 917 Z" fill="none" stroke="#fff" stroke-width="1.5" stroke-linecap="round" stroke-linejoin="round"/></svg>
<div class="t" style="left:293.2px;top:902.5px;font-size:12.6px;color:#d4d4d4">6</div>
<span class="jt" style="left:257.10px;top:926.06px;width:38.20px;height:16.32px;font-size:13.6px"><svg width="38.20" height="16.32" viewBox="0 -12.24 38.20 16.32"><text x="0" y="0" font-size="13.6" font-weight="500" fill="#fff" textLength="38.2" lengthAdjust="spacingAndGlyphs">参加者</text></svg></span>
<svg class="ic" style="left:372px;top:898px" width="28" height="26" viewBox="372 898 28 26" ><path d="M381.1 903.1 C381.9 901.5 383.3 900.5 385.2 900.5 H392.4 A4.7 4.7 0 0 1 397.1 905.2 V908.4 C397.1 910.2 396.3 911.6 395 912.4" fill="none" stroke="#fff" stroke-width="1.5" stroke-linecap="round" stroke-linejoin="round"/><path d="M380.9 905.8 H387.9 A4.5 4.5 0 0 1 392.4 910.3 V914.1 A4.5 4.5 0 0 1 387.9 918.6 H386.7 L381.7 921.5 C381.3 921.7 380.9 921.4 381 921 L382 918.6 H380.9 A4.5 4.5 0 0 1 376.4 914.1 V910.3 A4.5 4.5 0 0 1 380.9 905.8 Z" fill="none" stroke="#fff" stroke-width="1.5" stroke-linecap="round" stroke-linejoin="round"/><g fill="#fff"><rect x="379.6" y="911.1" width="2" height="2" rx="0.5"/><rect x="383.3" y="911.1" width="2" height="2" rx="0.5"/><rect x="387.1" y="911.1" width="2" height="2" rx="0.5"/></g></svg>
<svg class="ic" style="left:414.1px;top:905.9px" width="12" height="10" viewBox="414.1 905.9 12 10" ><path d="M417.2 912.2 L420.1 909.4 L423 912.2" fill="none" stroke="#fff" stroke-width="1.3" stroke-linecap="round" stroke-linejoin="round"/></svg>
<span class="jt" style="left:369.70px;top:926.06px;width:35.00px;height:16.32px;font-size:13.6px"><svg width="35.00" height="16.32" viewBox="0 -12.24 35.00 16.32"><text x="0" y="0" font-size="13.6" font-weight="500" fill="#fff" textLength="35" lengthAdjust="spacingAndGlyphs">チャット</text></svg></span>
<svg class="ic" style="left:458px;top:898px" width="28" height="26" viewBox="458 898 28 26" ><g transform="translate(472.6 905.1) rotate(13)"><path d="M0 0 C-1.6 -2.6 -4 -3.8 -6.5 -3.8 C-9.8 -3.8 -11.9 -1.2 -11.9 1.8 C-11.9 7 -6 11.6 0 16.3 C6 11.6 11.7 7 11.7 1.8 C11.7 -1.2 9.7 -3.8 6.5 -3.8 C4 -3.8 1.6 -2.6 0 0 Z" fill="none" stroke="#fff" stroke-width="1.5" stroke-linecap="round" stroke-linejoin="round"/></g></svg>
<span class="jt" style="left:443.95px;top:926.06px;width:54.50px;height:16.32px;font-size:13.6px"><svg width="54.50" height="16.32" viewBox="0 -12.24 54.50 16.32"><text x="0" y="0" font-size="13.6" font-weight="500" fill="#fff" textLength="54.5" lengthAdjust="spacingAndGlyphs">リアクション</text></svg></span>
<svg class="ic" style="left:548px;top:900px" width="26" height="22" viewBox="548 900 26 22" ><rect x="548.9" y="900.9" width="24" height="20" rx="3.6" fill="#08f48f"/><path d="M560.9 915.7 V907.2 M557.1 910.6 L560.9 906.8 L564.7 910.6" fill="none" stroke="#0a0a0a" stroke-width="2.3" stroke-linecap="round" stroke-linejoin="round"/></svg>
<svg class="ic" style="left:592px;top:906.4px" width="12" height="10" viewBox="592 906.4 12 10" ><path d="M595.1 912.7 L598 909.9 L600.9 912.7" fill="none" stroke="#fff" stroke-width="1.3" stroke-linecap="round" stroke-linejoin="round"/></svg>
<span class="jt" style="left:548.70px;top:926.06px;width:24.40px;height:16.32px;font-size:13.6px"><svg width="24.40" height="16.32" viewBox="0 -12.24 24.40 16.32"><text x="0" y="0" font-size="13.6" font-weight="500" fill="#fff" textLength="24.4" lengthAdjust="spacingAndGlyphs">共有</text></svg></span>
<svg class="ic" style="left:637px;top:898px" width="26" height="24" viewBox="637 898 26 24" ><path d="M649 901.1 H645.6 A5.4 5.4 0 0 0 640.2 906.5 V909.9" fill="none" stroke="#fff" stroke-width="1.5" stroke-linecap="round" stroke-linejoin="round"/><circle cx="656" cy="904.8" r="3.65" fill="none" stroke="#fff" stroke-width="1.5" stroke-linecap="round" stroke-linejoin="round"/><circle cx="643.9" cy="916.9" r="3.65" fill="none" stroke="#fff" stroke-width="1.5" stroke-linecap="round" stroke-linejoin="round"/><path d="M659.9 912 V915.4 A5.4 5.4 0 0 1 654.5 920.8 H651.1" fill="none" stroke="#fff" stroke-width="1.5" stroke-linecap="round" stroke-linejoin="round"/></svg>
<svg class="ic" style="left:672px;top:906px" width="12" height="10" viewBox="672 906 12 10" ><path d="M675.1 912.3 L678 909.5 L680.9 912.3" fill="none" stroke="#fff" stroke-width="1.3" stroke-linecap="round" stroke-linejoin="round"/></svg>
<span class="jt" style="left:637.00px;top:926.06px;width:26.60px;height:16.32px;font-size:13.6px"><svg width="26.60" height="16.32" viewBox="0 -12.24 26.60 16.32"><text x="0" y="0" font-size="13.6" font-weight="500" fill="#fff" textLength="26.6" lengthAdjust="spacingAndGlyphs">アプリ</text></svg></span>
<svg class="ic" style="left:719px;top:898px" width="26" height="26" viewBox="719 898 26 26" ><circle cx="732" cy="911" r="10.3" fill="none" stroke="#fff" stroke-width="1.3"/><circle cx="732.1" cy="911" r="4.55" fill="#fff"/></svg>
<span class="jt" style="left:698.20px;top:926.06px;width:67.00px;height:16.32px;font-size:13.6px"><svg width="67.00" height="16.32" viewBox="0 -12.24 67.00 16.32"><text x="0" y="0" font-size="13.6" font-weight="500" fill="#fff" textLength="67" lengthAdjust="spacingAndGlyphs">レコーディング</text></svg></span>
<svg class="ic" style="left:819px;top:894px" width="40" height="30" viewBox="819 894 40 30" ><g fill="#fff"><rect x="821.2" y="899.2" width="10.6" height="10.5" rx="1.5"/><rect x="834" y="899.2" width="10.6" height="10.5" rx="1.5"/><rect x="821.2" y="912" width="10.6" height="10.5" rx="1.5"/><rect x="834" y="912" width="10.6" height="10.5" rx="1.5"/></g><circle cx="847.8" cy="904.3" r="8.5" fill="#000"/><circle cx="847.8" cy="904.3" r="7.5" fill="#f2383f"/></svg>
<div class="t" style="left:844.5px;top:898.5px;font-size:11.6px;font-weight:700">2</div>
<span class="jt" style="left:781.75px;top:926.06px;width:102.50px;height:16.32px;font-size:13.6px"><svg width="102.50" height="16.32" viewBox="0 -12.24 102.50 16.32"><text x="0" y="0" font-size="13.6" font-weight="500" fill="#fff" textLength="102.5" lengthAdjust="spacingAndGlyphs">ブレイクアウト ルーム</text></svg></span>
<svg class="ic" style="left:919px;top:900px" width="28" height="22" viewBox="919 900 28 22" ><rect x="922.2" y="903.1" width="21.7" height="15.9" rx="3.6" fill="none" stroke="#fff" stroke-width="1.7"/></svg>
<div class="t" style="left:925.2px;top:906.8px;font-size:10.9px;font-weight:700;letter-spacing:0;transform:scaleX(0.975)">CC</div>
<svg class="ic" style="left:954.6px;top:905.9px" width="12" height="10" viewBox="954.6 905.9 12 10" ><path d="M957.7 912.2 L960.6 909.4 L963.5 912.2" fill="none" stroke="#fff" stroke-width="1.3" stroke-linecap="round" stroke-linejoin="round"/></svg>
<span class="jt" style="left:902.25px;top:926.06px;width:61.50px;height:16.32px;font-size:13.6px"><svg width="61.50" height="16.32" viewBox="0 -12.24 61.50 16.32"><text x="0" y="0" font-size="13.6" font-weight="500" fill="#fff" textLength="61.5" lengthAdjust="spacingAndGlyphs">字幕を表示</text></svg></span>
<svg class="ic" style="left:1008px;top:897px" width="28" height="28" viewBox="1008 897 28 28" ><circle cx="1021.3" cy="910.8" r="10.7" fill="none" stroke="#fff" stroke-width="1.4"/><path d="M1018.4 909.7 H1021.3 V916.2 M1018.2 916.4 H1024.6" fill="none" stroke="#fff" stroke-width="1.8"/><circle cx="1020.9" cy="905.7" r="1.4" fill="#fff"/></svg>
<span class="jt" style="left:980.70px;top:926.06px;width:82.60px;height:16.32px;font-size:13.6px"><svg width="82.60" height="16.32" viewBox="0 -12.24 82.60 16.32"><text x="0" y="0" font-size="13.6" font-weight="500" fill="#fff" textLength="82.6" lengthAdjust="spacingAndGlyphs">ミーティング情報</text></svg></span>
<svg class="ic" style="left:1100px;top:897px" width="28" height="28" viewBox="1100 897 28 28" ><circle cx="1113" cy="910.8" r="10.7" fill="none" stroke="#fff" stroke-width="1.4"/><circle cx="1108" cy="910.8" r="1.3" fill="#fff"/><circle cx="1113" cy="910.8" r="1.3" fill="#fff"/><circle cx="1118" cy="910.8" r="1.3" fill="#fff"/></svg>
<span class="jt" style="left:1100.90px;top:926.06px;width:24.20px;height:16.32px;font-size:13.6px"><svg width="24.20" height="16.32" viewBox="0 -12.24 24.20 16.32"><text x="0" y="0" font-size="13.6" font-weight="500" fill="#fff" textLength="24.2" lengthAdjust="spacingAndGlyphs">詳細</text></svg></span>
<svg class="ic" style="left:1212px;top:897px" width="30" height="28" viewBox="1212 897 30 28" ><path d="M1223.2 899.6 H1237.9 V918.7 L1231.1 922 V904.3 L1237.9 899.8" fill="none" stroke="#ff1f5b" stroke-width="1.7" stroke-linejoin="round"/><circle cx="1223" cy="904.6" r="2.75" fill="#000" stroke="#fff" stroke-width="1.5"/><path d="M1220.5 908.8 C1221.7 908 1224 908 1225.1 908.9 L1228.4 912 C1229 912.7 1228.2 913.7 1227.4 913.2 L1225.6 912 L1225.4 915.6 L1227 921.2 C1227.3 922.8 1225.2 923.3 1224.6 922 L1222.5 917 L1218.7 922.3 C1217.8 923.4 1216 922.4 1216.7 921.1 L1219.4 915.6 L1219.4 911.4 L1217 913.5 C1216.2 914.1 1215.2 913.2 1215.8 912.4 Z" fill="#000" stroke="#fff" stroke-width="1.45" stroke-linejoin="round"/></svg>
<span class="jt" style="left:1181.40px;top:926.06px;width:89.20px;height:16.32px;font-size:13.6px"><svg width="89.20" height="16.32" viewBox="0 -12.24 89.20 16.32"><text x="0" y="0" font-size="13.6" font-weight="500" fill="#fff" textLength="89.2" lengthAdjust="spacingAndGlyphs">ルームを退出する</text></svg></span>
</footer>
</div>
</body></html>
